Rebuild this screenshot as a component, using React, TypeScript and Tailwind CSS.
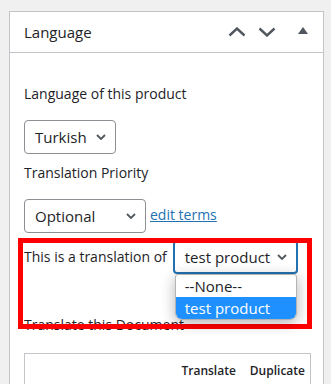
import { ReactNode } from 'react';

function Chevron() {
  return (
    <svg width="10" height="6" viewBox="0 0 10 6">
      <polyline points="1,1 5,5 9,1" fill="none" stroke="#50575e" strokeWidth="1.8" />
    </svg>
  );
}

function Select({ children, w, focused = false }: { children: ReactNode; w: string; focused?: boolean }) {
  return (
    <div
      className={`${w} h-[34px] flex items-center justify-between pl-[10px] pr-[9px] rounded-[4px] bg-white text-[15px] ${
        focused ? 'border-2 border-[#2271b1]' : 'border border-[#8c8f94]'
      }`}
    >
      <span className="leading-none whitespace-nowrap">{children}</span>
      <Chevron />
    </div>
  );
}

export default function App() {
  return (
    <div className="w-[331px] h-[384px] overflow-hidden bg-[#f0f0f1] pt-[11px] pl-[9px] font-['Open_Sans',sans-serif] text-[#1d2327]">
      <div className="w-[315px] h-[400px] bg-white border border-[#c3c4c7]">
        {/* header */}
        <div className="flex items-center h-[41px] border-b border-[#c3c4c7] pl-[14px]">
          <h2 className="flex-1 text-[15px]">Language</h2>
          <div className="flex items-center">
            <svg width="18" height="10" viewBox="0 0 18 10" className="mr-[12px]">
              <polyline points="1.5,8.5 9,1.5 16.5,8.5" fill="none" stroke="#50575e" strokeWidth="2.4" />
            </svg>
            <svg width="18" height="10" viewBox="0 0 18 10" className="mr-[22px]">
              <polyline points="1.5,1.5 9,8.5 16.5,1.5" fill="none" stroke="#50575e" strokeWidth="2.4" />
            </svg>
            <svg width="10" height="7" viewBox="0 0 10 7" className="mr-[15px] mb-[3px]">
              <polygon points="0,7 5,0 10,7" fill="#50575e" />
            </svg>
          </div>
        </div>

        {/* body */}
        <div className="pl-[14px] pt-[31px]">
          <p className="text-[14px] leading-[20px]">Language of this product</p>
          <div className="mt-[16px]">
            <Select w="w-[92px]">Turkish</Select>
          </div>
          <p className="mt-[9px] text-[14px] leading-[20px]">Translation Priority</p>
          <div className="mt-[16px] flex items-center gap-[4px]">
            <Select w="w-[122px]">Optional</Select>
            <a className="text-[14px] text-[#2271b1] underline mb-[4px]">edit terms</a>
          </div>

          <div className="relative mt-[7px] flex items-center gap-[6px]">
            <span className="text-[14px] leading-[20px] whitespace-nowrap">This is a translation of</span>
            <div className="relative">
              <Select w="w-[125px]" focused>
                test product
              </Select>
              <div className="absolute left-[2px] top-[34px] w-[122px] z-20 bg-white border border-[#b4b4b4] rounded-b-[7px] rounded-t-[3px] overflow-hidden shadow-[0_3px_14px_rgba(0,0,0,0.3)] text-[15px]">
                <div className="h-[22px] pl-[9px] flex items-center">--None--</div>
                <div className="h-[22px] pl-[9px] flex items-center bg-[#1e90ff] text-white">test product</div>
              </div>
            </div>
            <div className="absolute left-[-6px] top-[-2px] w-[294px] h-[91px] border-[5px] border-[#ff0000] z-10 pointer-events-none" />
          </div>

          <p className="mt-[41px] text-[14px] leading-[20px]">Translate this Document</p>

          <div className="mt-[18px] w-[287px] h-[60px] border border-[#c3c4c7] flex justify-end gap-[14px] pr-[5px] pt-[8px]">
            <span className="text-[12px] font-semibold">Translate</span>
            <span className="text-[12px] font-semibold">Duplicate</span>
          </div>
        </div>
      </div>
    </div>
  );
}
